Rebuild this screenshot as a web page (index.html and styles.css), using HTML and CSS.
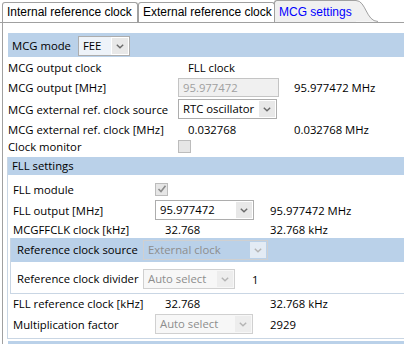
FILE: index.html
```html
<!DOCTYPE html>
<html>
<head>
<meta charset="utf-8">
<link rel="stylesheet" href="styles.css">
</head>
<body>
<div class="tabs">
  <div class="tab t1">Internal reference clock</div>
  <div class="tab t2">External reference clock</div>
  <div class="tab t3">MCG settings</div>
  <svg class="tab-curve" width="22" height="22" viewBox="0 0 22 22"><path d="M0 0.5 C10 0.5 10 21.5 22 21.5 L0 21.5 Z" fill="#f0f0f0"/><path d="M0 0.5 C10 0.5 10 21.5 22 21.5" fill="none" stroke="#a0a0a0"/></svg>
</div>

<div class="panel">
  <div class="band mode-band">
    <span class="mode-label">MCG mode</span>
    <div class="combo mode-combo"><span class="combo-text">FEE</span><span class="combo-btn"><svg width="8" height="5" viewBox="0 0 8 5"><path d="M0.8 0.8 L4 3.8 L7.2 0.8" fill="none" stroke="#6a6a6a" stroke-width="1.4"/></svg></span></div>
  </div>

  <div class="grid top-grid">
    <div class="lbl">MCG output clock</div><div class="txt">FLL clock</div><div></div>
    <div class="lbl">MCG output [MHz]</div><div><div class="input dis w101">95.977472</div></div><div class="txt3">95.977472 MHz</div>
    <div class="lbl">MCG external ref. clock source</div><div><div class="combo w99"><span class="combo-text">RTC oscillator</span><span class="combo-btn"><svg width="8" height="5" viewBox="0 0 8 5"><path d="M0.8 0.8 L4 3.8 L7.2 0.8" fill="none" stroke="#6a6a6a" stroke-width="1.4"/></svg></span></div></div><div></div>
    <div class="lbl">MCG external ref. clock [MHz]</div><div class="txt">0.032768</div><div class="txt3">0.032768 MHz</div>
    <div class="lbl">Clock monitor</div><div><div class="chk"></div></div><div></div>
  </div>

  <div class="group fll">
    <div class="band fll-band">FLL settings</div>
    <div class="grid fll-grid">
      <div class="lbl">FLL module</div><div><div class="chk"><svg width="10" height="10" viewBox="0 0 10 10"><path d="M1.5 5 L4 7.5 L8.5 1.8" fill="none" stroke="#8c8c8c" stroke-width="1.6"/></svg></div></div><div></div>
      <div class="lbl">FLL output [MHz]</div><div><div class="combo w99"><span class="combo-text">95.977472</span><span class="combo-btn"><svg width="8" height="5" viewBox="0 0 8 5"><path d="M0.8 0.8 L4 3.8 L7.2 0.8" fill="none" stroke="#6a6a6a" stroke-width="1.4"/></svg></span></div></div><div class="txt3">95.977472 MHz</div>
      <div class="lbl">MCGFFCLK clock [kHz]</div><div class="txt">32.768</div><div class="txt3">32.768 kHz</div>
    </div>

    <div class="group ref">
      <div class="band ref-band">
        <span class="ref-label">Reference clock source</span>
        <div class="combo dis w125"><span class="combo-text">External clock</span><span class="combo-btn"><svg width="8" height="5" viewBox="0 0 8 5"><path d="M0.8 0.8 L4 3.8 L7.2 0.8" fill="none" stroke="#b4b4b4" stroke-width="1.4"/></svg></span></div>
      </div>
      <div class="ref-row">
        <span class="ref-label">Reference clock divider</span>
        <div class="combo dis w92"><span class="combo-text">Auto select</span><span class="combo-btn"><svg width="8" height="5" viewBox="0 0 8 5"><path d="M0.8 0.8 L4 3.8 L7.2 0.8" fill="none" stroke="#b4b4b4" stroke-width="1.4"/></svg></span></div>
        <span class="ref-val">1</span>
      </div>
    </div>

    <div class="grid low-grid">
      <div class="lbl">FLL reference clock [kHz]</div><div class="txt">32.768</div><div class="txt3">32.768 kHz</div>
      <div class="lbl">Multiplication factor</div><div><div class="combo dis w98"><span class="combo-text">Auto select</span><span class="combo-btn"><svg width="8" height="5" viewBox="0 0 8 5"><path d="M0.8 0.8 L4 3.8 L7.2 0.8" fill="none" stroke="#b4b4b4" stroke-width="1.4"/></svg></span></div></div><div class="txt3">2929</div>
    </div>
  </div>

  <div class="band next-band"></div>
</div>
</body>
</html>
```

FILE: styles.css
```css
html, body {
  margin: 0;
  padding: 0;
  background: #ffffff;
  overflow: hidden;
}
body {
  width: 404px;
  height: 344px;
  font-family: "Open Sans", "Noto Sans", sans-serif;
  font-size: 11.3px;
  color: #000;
}

/* Tabs */
.tabs {
  display: flex;
  align-items: flex-end;
  height: 22px;
  padding-left: 2px;
  border-bottom: 1px solid #a0a0a0;
}
.tab {
  box-sizing: border-box;
  height: 20px;
  border: 1px solid #a0a0a0;
  border-bottom: none;
  border-radius: 3px 3px 0 0;
  background: #fff;
  font-family: "Liberation Sans", Arial, sans-serif;
  font-size: 12px;
  line-height: 19px;
  padding-left: 4px;
  white-space: nowrap;
}
.t1 { width: 136px; }
.t2 { width: 137px; }
.t3 {
  width: 82px;
  height: 22px;
  line-height: 22px;
  background: #f0f0f0;
  color: #0000ff;
  border-right: none;
  border-radius: 3px 0 0 0;
  margin-left: -1px;
}
.tab-curve {
  display: block;
  flex: none;
}

/* Panel */
.panel {
  margin-left: 2px;
  border-left: 1px solid #a0a0a0;
  padding-left: 4px;
  padding-top: 10px;
}
.band {
  background: #bad1e9;
}
.mode-band {
  margin-left: 1px;
  height: 24px;
  box-sizing: border-box;
  padding-top: 3px;
  display: flex;
  align-items: flex-start;
}
.mode-label {
  width: 66px;
  padding-left: 4px;
  line-height: 20px;
}
.mode-combo {
  width: 52px;
  border-color: #dfe6ee;
}
.mode-combo .combo-text {
  background: #eef3f9;
}

/* Grids */
.grid {
  display: grid;
  align-items: center;
  white-space: nowrap;
}
.top-grid {
  padding-left: 1px;
  grid-template-columns: 170px 116px 1fr;
  grid-template-rows: 20px 20px 24px 16px 18px;
}
.fll-grid, .low-grid {
  padding-left: 5px;
  grid-template-columns: 142px 115px 1fr;
}
.fll-grid {
  padding-top: 3px;
  grid-template-rows: 22px 20px 18px;
}
.low-grid {
  grid-template-rows: 18px 24px;
  padding-bottom: 2px;
}
.txt {
  padding-left: 10px;
}

/* Groups */
.group {
  border-left: 1px solid #c9d6e4;
  border-bottom: 1px solid #c9d6e4;
}
.fll {
  margin-top: 2px;
}
.fll-band {
  height: 18px;
  line-height: 18px;
  padding-left: 4px;
}
.ref {
  margin-left: 2px;
}
.ref-band {
  height: 24px;
  box-sizing: border-box;
  padding-top: 2px;
  display: flex;
  align-items: flex-start;
}
.ref-label {
  width: 126px;
  padding-left: 6px;
  line-height: 20px;
  white-space: nowrap;
}
.ref-row {
  display: flex;
  align-items: center;
  padding: 7px 0 4px 0;
}
.ref-val {
  margin-left: 17px;
}
.next-band {
  margin-top: 2px;
  margin-left: 1px;
  height: 3px;
}

/* Controls */
.combo {
  box-sizing: border-box;
  display: flex;
  height: 20px;
  border: 1px solid #adadad;
  background: #fff;
}
.combo-text {
  flex: 1;
  padding-left: 4px;
  line-height: 18px;
  overflow: hidden;
  white-space: nowrap;
}
.combo-btn {
  width: 16px;
  margin: 1px;
  background: #e8e8e8;
  display: flex;
  align-items: center;
  justify-content: center;
}
.combo.dis {
  border-color: #d0d0d0;
  background: #f7f7f7;
  color: #8d8d8d;
}
.combo.dis .combo-btn {
  background: #ededed;
}
.ref-band .combo.dis {
  background: transparent;
}
.ref-band .combo.dis .combo-btn {
  background: #e3ebf4;
}
.input {
  box-sizing: border-box;
  height: 19px;
  border: 1px solid #c4c4c4;
  line-height: 17px;
  padding-left: 4px;
}
.input.dis {
  background: #f0f0f0;
  color: #a0a0a0;
}
.w101 { width: 101px; }
.w99 { width: 99px; }
.w98 { width: 98px; }
.w92 { width: 92px; }
.w125 { width: 125px; }

.chk {
  box-sizing: border-box;
  width: 13px;
  height: 13px;
  border: 1px solid #bcbcbc;
  background: #e6e6e6;
  display: flex;
  align-items: center;
  justify-content: center;
}
```
